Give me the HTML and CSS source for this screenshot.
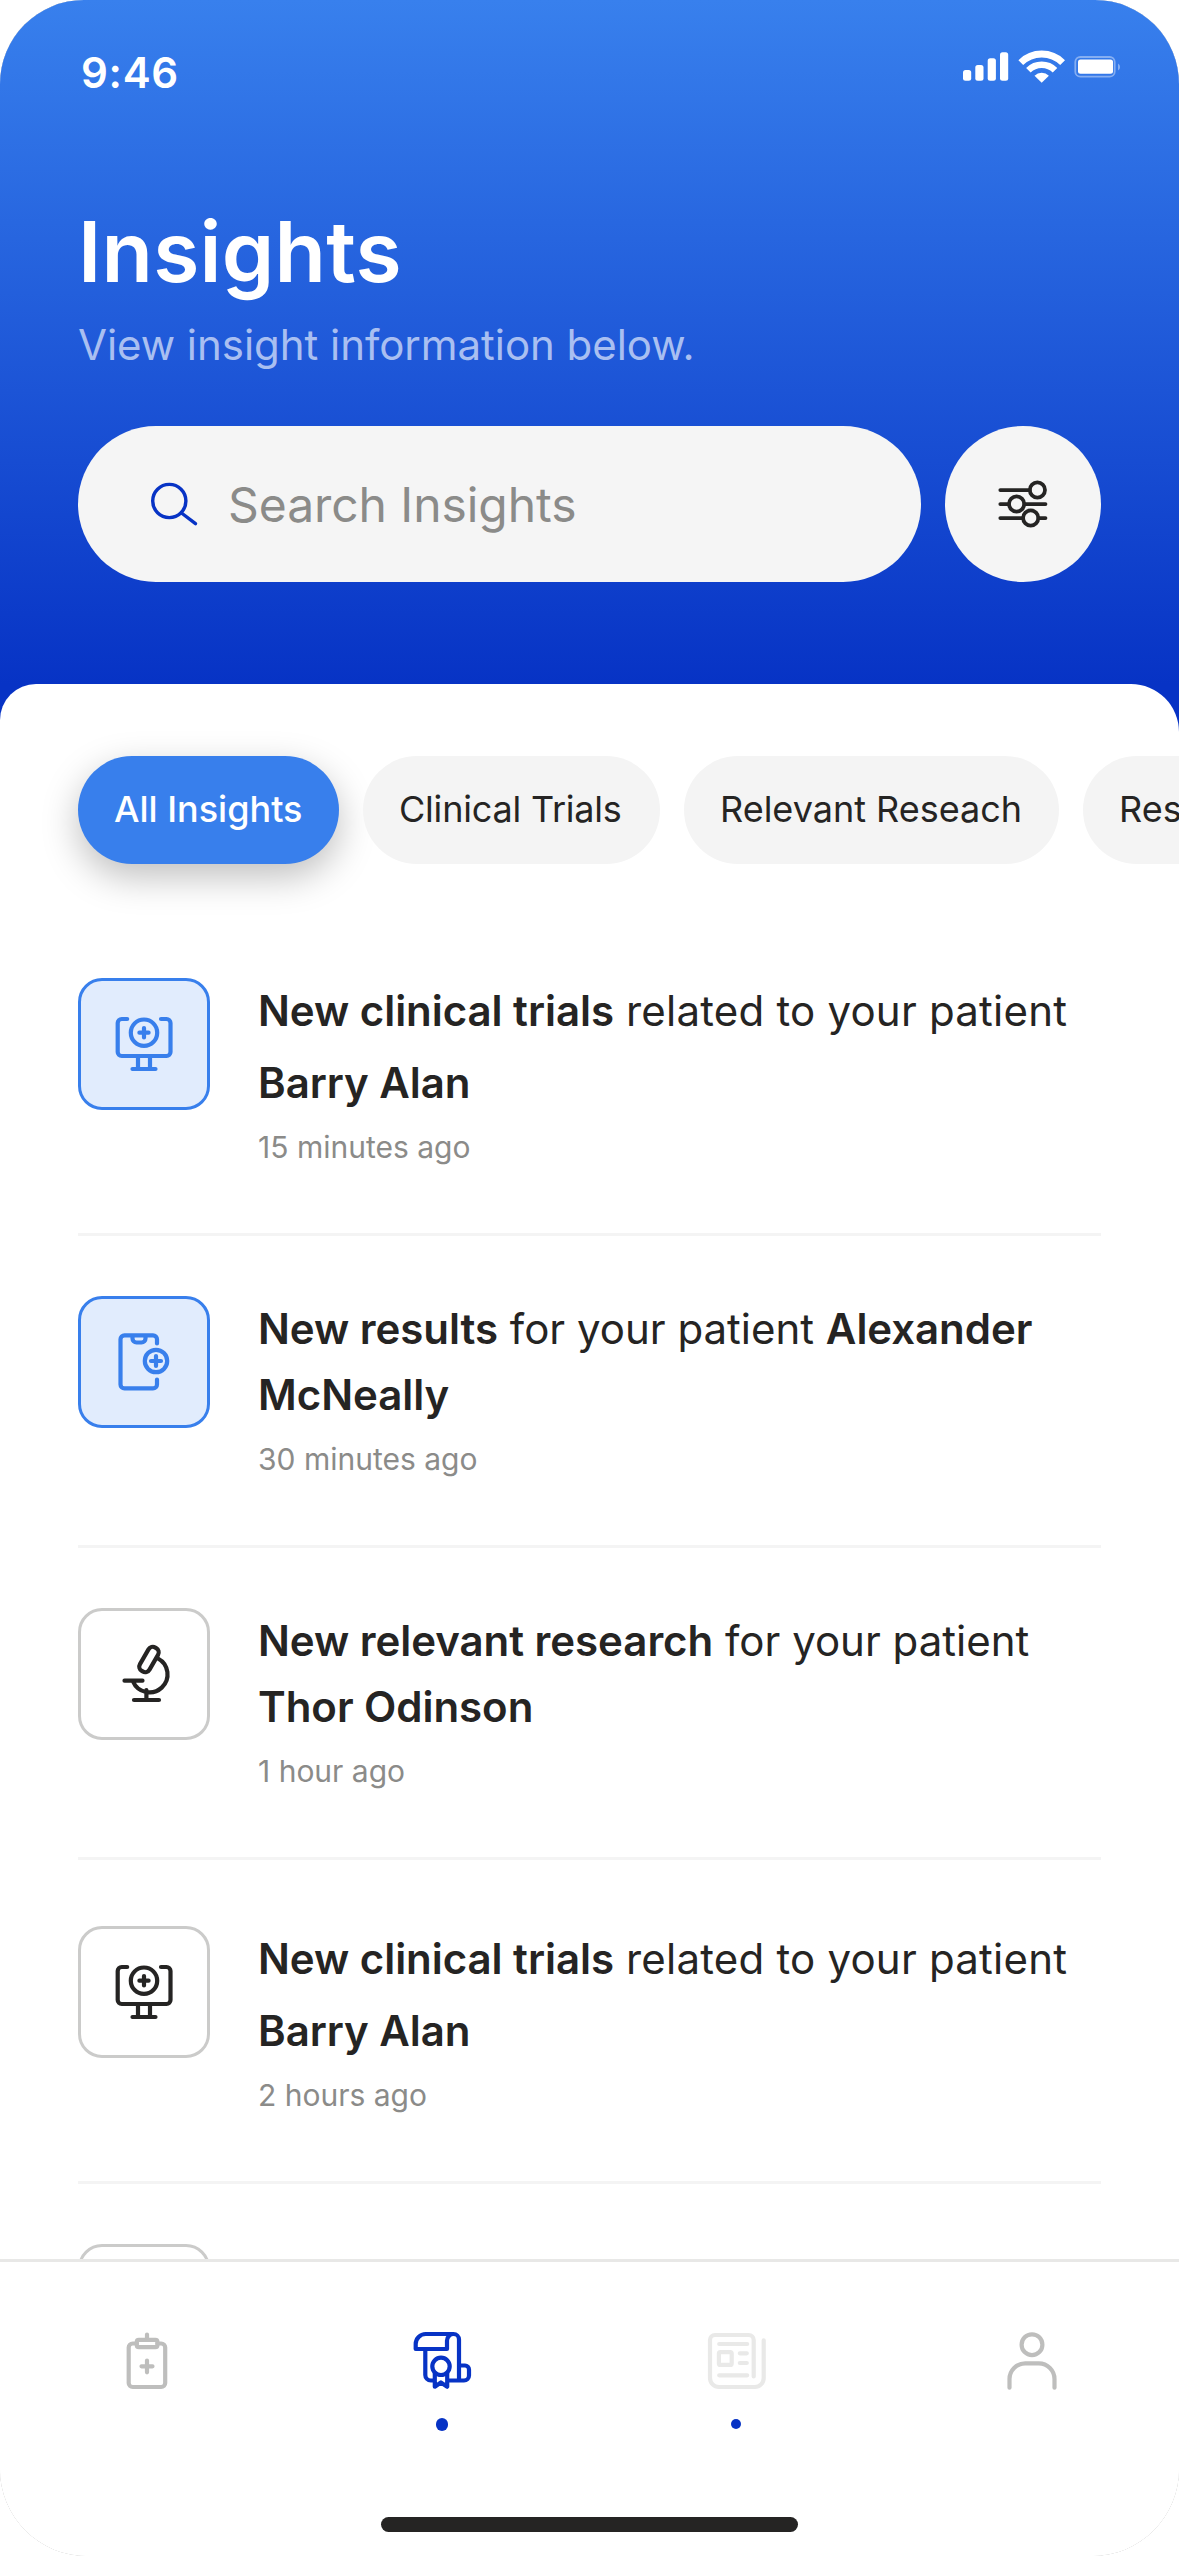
FILE: index.html
```html
<!DOCTYPE html>
<html lang="en">
<head>
<meta charset="utf-8">
<title>Insights</title>
<link rel="stylesheet" href="styles.css">
</head>
<body>
<svg class="sprite" width="0" height="0" aria-hidden="true">
  <symbol id="monitor" viewBox="3 3 126 126">
    <path d="M45 41h-1.300a4 4 0 0 0-4 4v29a4 4 0 0 0 4 4h44.800a4 4 0 0 0 4-4v-29a4 4 0 0 0-4-4h-5.500M49.200 41h-4.200M60 78v13M72 78v13M54.500 91h23"/>
    <circle cx="66" cy="54.700" r="13.200"/>
    <path d="M61.400 54.700h9.200M66 50v9.400"/>
  </symbol>
  <symbol id="phone" viewBox="3 3 126 126">
    <path d="M79 47.500v-4.200a4 4 0 0 0-4-4H46.500a4 4 0 0 0-4 4v45.100a4 4 0 0 0 4 4H75a4 4 0 0 0 4-4v-4.900M54.500 39.300v3.200a4 4 0 0 0 4 4h5a4 4 0 0 0 4-4v-3.200"/>
    <circle cx="78" cy="65" r="11.200"/>
    <path d="M73 65h10M78 60v10"/>
  </symbol>
  <symbol id="microscope" viewBox="3 3 126 126">
    <rect x="65.500" y="38" width="11" height="27" rx="5" transform="rotate(30 71 51.500)"/>
    <path d="M80 50.500A18 18 0 1 1 55 73.500M46.500 72.700h18M68.400 82v10M56 92h25"/>
  </symbol>
</svg>

<div class="device">
<div class="app">
  <header class="hero">
    <div class="status">
      <span class="clock">9:46</span>
      <svg class="signals" width="162" height="36" viewBox="960 48 162 36">
        <g fill="#fff">
          <rect x="963" y="70" width="8.200" height="10.700" rx="2.500"/>
          <rect x="975.300" y="65" width="8.200" height="15.700" rx="2.500"/>
          <rect x="987.700" y="58.300" width="8.200" height="22.400" rx="2.500"/>
          <rect x="1000" y="52.200" width="8.200" height="28.500" rx="2.500"/>
          <path d="M1041.700 82.800l-7.200-7.100a10.200 10.200 0 0 1 14.400 0z"/>
          <rect x="1078" y="59.600" width="35" height="14.200" rx="2.500"/>
          <path d="M1118 63.500a4 4 0 0 1 0 7z" opacity=".4"/>
        </g>
        <g fill="none" stroke="#fff">
          <path d="M1020.800 62.600a29.700 29.700 0 0 1 41.800 0" stroke-width="6.800"/>
          <path d="M1028.400 70.200a18.800 18.800 0 0 1 26.600 0" stroke-width="6.400"/>
          <rect x="1075.300" y="57" width="39.400" height="19.700" rx="5" stroke-width="1.800" opacity=".4"/>
        </g>
      </svg>
    </div>
    <h1 class="title">Insights</h1>
    <p class="subtitle">View insight information below.</p>
    <div class="search-row">
      <div class="search">
        <svg class="search-icon" width="54" height="54" viewBox="147 477 54 54">
          <circle cx="169.300" cy="501" r="16.600"/>
          <path d="M181.500 513l14 10.600"/>
        </svg>
        <span>Search Insights</span>
      </div>
      <button class="filter" aria-label="Filter">
        <svg width="60" height="60" viewBox="994 474 60 60">
          <path d="M1001.300 490h29.500M1001.300 504h8.500M1025.500 504h21M1001.300 518h22.500M1039.500 518h7"/>
          <circle cx="1038.400" cy="490" r="7.600"/>
          <circle cx="1017.600" cy="504" r="7.600"/>
          <circle cx="1031.700" cy="518" r="7.600"/>
        </svg>
      </button>
    </div>
  </header>

  <main class="sheet">
    <div class="pills">
      <span class="pill pill-active">All Insights</span>
      <span class="pill pill-trials">Clinical Trials</span>
      <span class="pill pill-relevant">Relevant Reseach</span>
      <span class="pill">Results</span>
    </div>

    <ul class="feed">
      <li class="item item-loose">
        <span class="tile tile-new"><svg><use href="#monitor"/></svg></span>
        <div class="copy">
          <p class="message"><b>New clinical trials</b> related to your patient<br><b>Barry Alan</b></p>
          <p class="time">15 minutes ago</p>
        </div>
      </li>
      <li class="item">
        <span class="tile tile-new"><svg><use href="#phone"/></svg></span>
        <div class="copy">
          <p class="message"><b>New results</b> for your patient <b>Alexander<br>McNeally</b></p>
          <p class="time">30 minutes ago</p>
        </div>
      </li>
      <li class="item">
        <span class="tile"><svg><use href="#microscope"/></svg></span>
        <div class="copy">
          <p class="message"><b>New relevant research</b> for your patient<br><b>Thor Odinson</b></p>
          <p class="time">1 hour ago</p>
        </div>
      </li>
      <li class="item item-loose item-lower">
        <span class="tile"><svg><use href="#monitor"/></svg></span>
        <div class="copy">
          <p class="message"><b>New clinical trials</b> related to your patient<br><b>Barry Alan</b></p>
          <p class="time">2 hours ago</p>
        </div>
      </li>
      <li class="item">
        <span class="tile"></span>
      </li>
    </ul>
  </main>

  <footer class="dock">
    <nav class="tabs">
      <a class="tab">
        <svg class="tab-icon" viewBox="0 0 72 72">
          <path d="M25.800 18.500h-4.100a4 4 0 0 0-4 4V58a4 4 0 0 0 4 4h28.500a4 4 0 0 0 4-4V22.500a4 4 0 0 0-4-4h-3.700M36 9.500v5M30.500 41.300h11M36 35.500v11.800"/>
          <rect x="25.800" y="14.800" width="20.600" height="7.400" rx="2"/>
        </svg>
      </a>
      <a class="tab tab-current">
        <svg class="tab-icon" viewBox="0 0 72 72">
          <path d="M19.700 9H47.500a5.500 5.500 0 0 1 5.500 5.500V55.500M47.500 9a6.500 6.500 0 0 0-6.500 6.500V24H9.700v-5a10 10 0 0 1 10-10M19.300 24V50a5.500 5.500 0 0 0 5.500 5.500h3.900M41.300 55.500H58a5 5 0 0 0 5-5V44.500a4 4 0 0 0-4-4h-6M28.800 48v13.700l6.100-4.200 6.300 4.200V48"/>
          <circle cx="35" cy="41.300" r="8.700"/>
        </svg>
        <span class="dot"></span>
      </a>
      <a class="tab tab-faint">
        <svg class="tab-icon" viewBox="0 0 72 72">
          <path d="M52.700 51.500V15a5 5 0 0 0-5-5H14a5 5 0 0 0-5 5v38a9 9 0 0 0 9 9h35.700a9 9 0 0 0 9-9V15.300M18.200 19h28M38.800 28.300h7M38.800 38h7M18.200 50.300h28"/>
          <rect x="17.900" y="27.100" width="12.800" height="12.800" rx="1.500"/>
        </svg>
        <span class="dot dot-small"></span>
      </a>
      <a class="tab">
        <svg class="tab-icon" viewBox="0 0 72 72">
          <circle cx="36" cy="19.700" r="10.400"/>
          <path d="M13.500 62.700V54a15.700 15.700 0 0 1 15.700-15.700h13.600A15.700 15.700 0 0 1 58.500 54v8.700"/>
        </svg>
      </a>
    </nav>
    <div class="home-bar"></div>
  </footer>
</div>
</div>
</body>
</html>
```
FILE: styles.css
```css
* { box-sizing: border-box; }

body {
  margin: 0;
  background: #fff;
  font-family: Inter, "Liberation Sans", sans-serif;
  color: #252423;
}

h1, p, ul { margin: 0; padding: 0; }
ul { list-style: none; }
b { font-weight: 600; letter-spacing: -.04px; }
svg { display: block; }
.sprite { position: absolute; }

.device {
  width: 1179px;
  height: 2556px;
  border-radius: 84px 84px 87px 87px;
  background: #777;
}

.app {
  display: flex;
  flex-direction: column;
  height: 2556px;
  overflow: hidden;
  border-radius: 84px 84px 87px 87px;
  background: #fff;
}

/* Header */
.hero {
  flex: none;
  height: 744px;
  margin-bottom: -60px;
  padding: 46px 78px 0;
  background: linear-gradient(#3880ed 0, #0733c5 684px);
  color: #fff;
}

.status {
  display: flex;
  justify-content: space-between;
  height: 51px;
  margin: 0 -21px 0 3px;
}

.clock {
  font-size: 42px;
  font-weight: 600;
  line-height: 53px;
  letter-spacing: .7px;
}

.signals { margin-top: 2px; }

.title {
  margin-top: 104px;
  font-size: 84px;
  font-weight: 600;
  line-height: 102px;
  letter-spacing: .25px;
}

.subtitle {
  margin-top: 15px;
  font-size: 42px;
  line-height: 54px;
  letter-spacing: -.04px;
  color: #a9bff1;
}

.search-row {
  display: flex;
  gap: 24px;
  margin-top: 54px;
}

.search {
  display: flex;
  flex: 1;
  align-items: center;
  gap: 27px;
  height: 156px;
  padding-left: 69px;
  border-radius: 78px;
  background: #f5f5f5;
  font-size: 48px;
  letter-spacing: -.06px;
  color: #8b8b89;
}

.search-icon {
  fill: none;
  stroke: #0733c5;
  stroke-width: 3.400;
  stroke-linecap: round;
}

.filter {
  display: flex;
  align-items: center;
  justify-content: center;
  width: 156px;
  height: 156px;
  padding: 0;
  border: 0;
  border-radius: 50%;
  background: #f5f5f5;
}

.filter svg {
  fill: none;
  stroke: #252423;
  stroke-width: 3.750;
  stroke-linecap: round;
}

/* Content */
.sheet {
  flex: 1;
  min-height: 0;
  overflow: hidden;
  padding: 72px 78px 0;
  border-radius: 36px 48px 0 0;
  background: #fff;
}

.pills {
  display: flex;
  gap: 24px;
  margin-right: -78px;
}

.pill {
  flex: none;
  height: 108px;
  padding: 0 36px;
  border-radius: 54px;
  background: #f4f4f4;
  font-size: 36px;
  line-height: 106px;
  white-space: nowrap;
}

.pill-active {
  width: 261px;
  background: #387fec;
  color: #fff;
  font-weight: 500;
  box-shadow: 0 13px 36px rgba(0, 0, 0, .25);
}

.pill-trials {
  width: 297px;
  letter-spacing: -.2px;
}

.pill-relevant { width: 375px; }

.feed { padding-top: 114px; }

.item {
  display: flex;
  align-items: flex-start;
  gap: 48px;
  margin-bottom: 60px;
  padding-bottom: 68px;
  border-bottom: 3px solid #f4f4f4;
}

.item-lower { margin-top: 66px; }

.tile {
  flex: none;
  width: 132px;
  height: 132px;
  border: 3px solid #cbcbca;
  border-radius: 24px;
  color: #252423;
}

.tile-new {
  border-color: #387fec;
  background: #e1ecfd;
  color: #387fec;
}

.tile svg {
  width: 126px;
  height: 126px;
  fill: none;
  stroke: currentColor;
  stroke-width: 4.200;
  stroke-linecap: round;
  stroke-linejoin: round;
}

.message {
  font-size: 42px;
  line-height: 66px;
  white-space: nowrap;
}

.time {
  margin-top: 13px;
  font-size: 30px;
  line-height: 36px;
  color: #8b8b89;
}

.item-loose .message {
  margin-top: -3px;
  line-height: 72px;
  letter-spacing: .22px;
}

.item-loose .time { margin-top: 10px; }

/* Bottom navigation */
.dock {
  flex: none;
  height: 297px;
  border-top: 3px solid #e8e8e7;
  background: #fff;
}

.tabs {
  display: grid;
  grid-template-columns: repeat(4, 1fr);
  height: 255px;
  padding-top: 63px;
}

.tab {
  display: flex;
  flex-direction: column;
  align-items: center;
  color: #bebebd;
}

.tab-current { color: #0733c5; }
.tab-faint { color: #e9e9e8; }

.tab-icon {
  width: 72px;
  height: 72px;
  fill: none;
  stroke: currentColor;
  stroke-width: 4.200;
  stroke-linecap: round;
  stroke-linejoin: round;
}

.dot {
  width: 12.600px;
  height: 12.600px;
  margin-top: 21px;
  border-radius: 50%;
  background: #0733c5;
}

.dot-small {
  width: 10px;
  height: 10px;
  margin-top: 22px;
  margin-right: 2px;
}

.home-bar {
  width: 417px;
  height: 15px;
  margin: 0 auto;
  border-radius: 8px;
  background: #252423;
}
```
